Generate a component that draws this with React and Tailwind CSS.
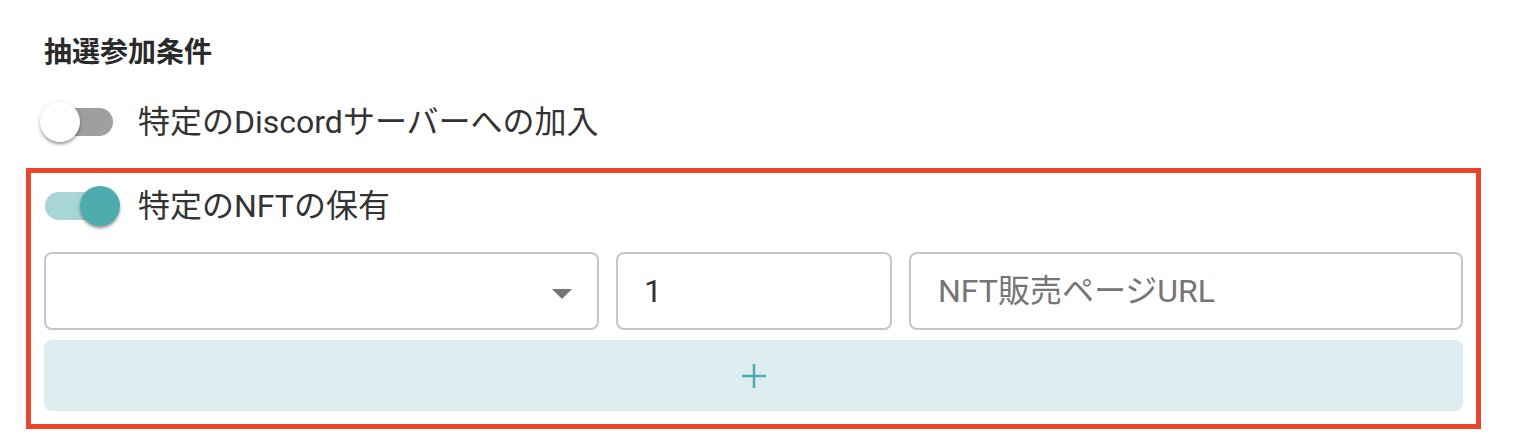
import React, { useState } from "react";

function Toggle({ checked, onChange }) {
  return (
    <button
      type="button"
      onClick={onChange}
      className="relative w-[80px] h-[40px] shrink-0"
    >
      <span
        className={`absolute left-[5px] top-[6px] w-[68px] h-[28px] rounded-full ${
          checked ? "bg-[#A8D6D7]" : "bg-[#9F9F9F]"
        }`}
      />
      <span
        className={`absolute top-0 w-[40px] h-[40px] rounded-full shadow-[0_3px_3px_-1px_rgba(0,0,0,0.25),0_2px_3px_0_rgba(0,0,0,0.14),0_1px_6px_0_rgba(0,0,0,0.12)] ${
          checked ? "left-[40px] bg-[#4FACAE]" : "left-0 bg-white"
        }`}
      />
    </button>
  );
}

function App() {
  const [discord, setDiscord] = useState(false);
  const [nft, setNft] = useState(true);

  return (
    <div className="w-[1514px] h-[438px] bg-white overflow-hidden font-['Roboto','Noto_Sans_CJK_JP',sans-serif] text-[#2a2a2a]">
      <div className="pl-[44px] pt-[39px]">
        <h2 className="text-[28px] leading-[28px] font-bold">抽選参加条件</h2>
      </div>

      <div className="flex items-center pl-[40px] mt-[35px] h-[40px]">
        <Toggle checked={discord} onChange={() => setDiscord(!discord)} />
        <span className="ml-[18px] text-[32px] leading-[40px] text-[#333333]">特定のDiscordサーバーへの加入</span>
      </div>

      <div className="ml-[26px] mt-[26px] w-[1455px] border-[5px] border-[#E8452C] px-[13px] pt-[13px] pb-[13px]">
        <div className="flex items-center h-[40px] -ml-[4px]">
          <Toggle checked={nft} onChange={() => setNft(!nft)} />
          <span className="ml-[18px] text-[32px] leading-[40px] text-[#333333]">特定のNFTの保有</span>
        </div>

        <div className="flex gap-[17px] mt-[26px]">
          <div className="relative w-[555px] h-[78px] rounded-[8px] border-2 border-[#C6C6C6] bg-white">
            <svg
              className="absolute right-[25px] top-[35px]"
              width="20"
              height="10"
              viewBox="0 0 20 10"
            >
              <path d="M0 0 L20 0 L10 10 Z" fill="#757575" />
            </svg>
          </div>
          <div className="w-[276px] h-[78px] rounded-[8px] border-2 border-[#C6C6C6] flex items-center pl-[26px]">
            <span className="text-[32px] leading-none text-[#333333]">1</span>
          </div>
          <div className="flex-1 h-[78px] rounded-[8px] border-2 border-[#C6C6C6] flex items-center pl-[27px]">
            <span className="text-[32px] leading-none text-[#757575]">NFT販売ページURL</span>
          </div>
        </div>

        <button
          type="button"
          className="mt-[10px] w-full h-[71px] rounded-[8px] bg-[#DCEEF0] flex items-center justify-center"
        >
          <svg width="26" height="26" viewBox="0 0 26 26">
            <path d="M13 1 V25 M1 13 H25" stroke="#4DAAAD" strokeWidth="2.5" fill="none" />
          </svg>
        </button>
      </div>
    </div>
  );
}

export default App;
